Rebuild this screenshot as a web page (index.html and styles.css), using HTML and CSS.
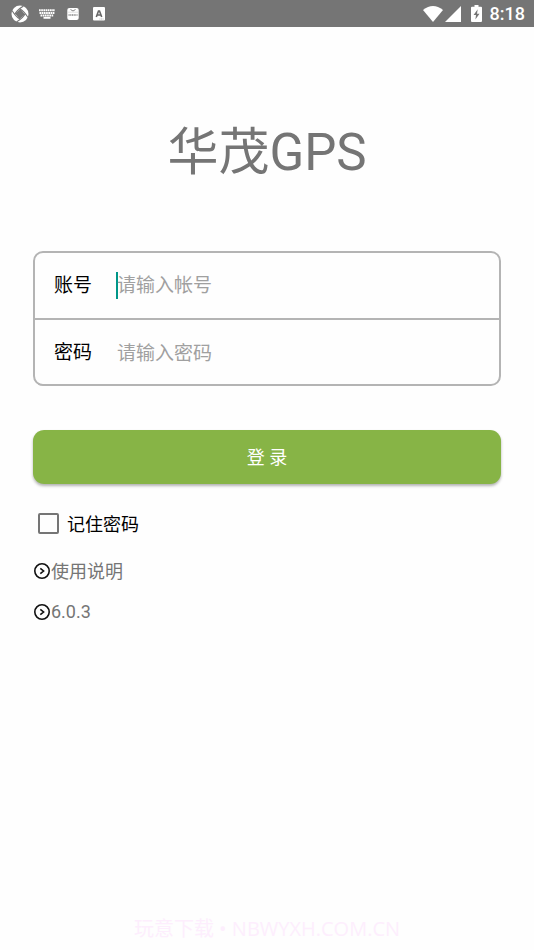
FILE: index.html
```html
<!DOCTYPE html>
<html lang="zh-CN">
<head>
<meta charset="utf-8">
<meta name="viewport" content="width=device-width, initial-scale=1">
<title>华茂GPS</title>
<link rel="stylesheet" href="styles.css">
</head>
<body>
<header class="status">
  <div class="status-left">
    <svg width="18" height="18" viewBox="0 0 18 18" aria-hidden="true">
      <circle cx="9" cy="9" r="8.5" fill="#fff"/>
      <path d="M9.5 4L14 9.5L8.5 14L4 8.5Z" fill="#757575"/>
      <g fill="none" stroke="#757575" stroke-width="1.1">
        <path d="M4 9Q6 5 12.5 1"/>
        <path d="M4 9Q6 5 12.5 1" transform="rotate(90 9 9)"/>
        <path d="M4 9Q6 5 12.5 1" transform="rotate(180 9 9)"/>
        <path d="M4 9Q6 5 12.5 1" transform="rotate(270 9 9)"/>
      </g>
    </svg>
    <svg width="16" height="10" viewBox="0 0 16 10" aria-hidden="true">
      <g stroke="#fff" stroke-width="1.9">
        <path d="M0 1.3H16M0.5 4H15.5" stroke-dasharray="1.7 .5"/>
        <path d="M1.5 6.5H14.5" stroke-dasharray="1.7 .5"/>
        <path d="M4.5 8.8H11.5"/>
      </g>
    </svg>
    <svg width="12" height="14" viewBox="0 0 12 14" aria-hidden="true">
      <rect x=".3" y="1" width="11.4" height="12" rx="2" fill="#fff"/>
      <path d="M1 5.2H11" stroke="#ccc" stroke-width=".6"/>
      <path d="M3.5 2.5Q6 5.5 8.5 2.5" fill="none" stroke="#757575" stroke-width=".9"/>
      <path d="M1.5 8H10.5" stroke="#888" stroke-width="1.3" stroke-dasharray="1.2 .5"/>
    </svg>
    <svg width="12" height="14" viewBox="0 0 12 14" aria-hidden="true">
      <rect width="12" height="13.5" rx="1" fill="#fff"/>
      <path d="M3.3 10L5.5 4H6.5L8.7 10M4.2 8H7.8" fill="none" stroke="#666" stroke-width="1.6"/>
      <path d="M6.5 12H11" stroke="#aaa" stroke-width=".8" stroke-dasharray="1 .5"/>
    </svg>
  </div>
  <div class="status-right">
    <svg width="20" height="16" viewBox="0 0 20 16" aria-hidden="true"><path d="M0 4Q10-4 20 4L10 16Z" fill="#fff"/></svg>
    <svg width="16" height="16" viewBox="0 0 16 16" aria-hidden="true"><path d="M16 0V16H0Z" fill="#fff"/></svg>
    <svg class="battery" width="11" height="17" viewBox="0 0 11 17" aria-hidden="true"><path d="M3.5 0H7.5V1.7H10Q11 1.7 11 2.7V16Q11 17 10 17H1Q0 17 0 16V2.7Q0 1.7 1 1.7H3.5Z" fill="#fff"/><path d="M6.7 4.3L2.6 10H5L4.4 14.6L8.5 8.8H6Z" fill="#757575"/></svg>
    <span class="clock">8:18</span>
  </div>
</header>
<main class="page">
  <h1 class="title">华茂GPS</h1>
  <form class="login">
    <div class="fields">
      <div class="field">
        <label class="label" for="account">账号</label>
        <div class="entry focused"><input class="input" id="account" type="text" placeholder="请输入帐号"></div>
      </div>
      <div class="field">
        <label class="label" for="password">密码</label>
        <div class="entry"><input class="input" id="password" type="password" placeholder="请输入密码"></div>
      </div>
    </div>
    <button class="submit" type="submit">登 录</button>
    <div class="remember">
      <input class="check" id="remember" type="checkbox">
      <label class="remember-label" for="remember">记住密码</label>
    </div>
  </form>
  <nav class="links">
    <a class="link" href="#help"><svg width="18" height="18" viewBox="0 0 18 18" aria-hidden="true"><circle cx="9" cy="9" r="7.2"/><path d="M7.3 6.3L10.6 9L7.3 11.7"/></svg><span class="link-text">使用说明</span></a>
    <a class="link" href="#version"><svg width="18" height="18" viewBox="0 0 18 18" aria-hidden="true"><circle cx="9" cy="9" r="7.2"/><path d="M7.3 6.3L10.6 9L7.3 11.7"/></svg><span>6.0.3</span></a>
  </nav>
</main>
<footer class="footer">玩意下载 • NBWYXH.COM.CN</footer>
</body>
</html>
```
FILE: styles.css
```css
* {
  box-sizing: border-box;
}

body {
  margin: 0;
  min-height: 100vh;
  display: flex;
  flex-direction: column;
  background: #fefefe;
  color: #000;
  font-family: Roboto, "Noto Sans CJK SC", sans-serif;
  font-size: 18px;
}

svg {
  display: block;
}

.status {
  display: flex;
  justify-content: space-between;
  align-items: center;
  height: 27px;
  padding: 0 9px 0 11px;
  background: #757575;
  color: #fff;
}

.status-left {
  display: flex;
  align-items: center;
  gap: 12px;
}

.status-left svg:first-child {
  margin-right: -2px;
}

.status-left svg:last-child {
  margin-left: 2px;
}

.status-right {
  display: flex;
  align-items: center;
  gap: 2px;
}

.battery {
  margin: 0 6px 0 8px;
}

.clock {
  font-size: 18px;
  font-weight: 500;
  line-height: 27px;
}

.page {
  flex: 1;
  padding: 86px 33px 0;
}

.title {
  margin: 0 0 58px;
  color: #757575;
  font-size: 51px;
  font-weight: 400;
  line-height: 80px;
  text-align: center;
}

.fields {
  border: 2px solid #b4b4b4;
  border-radius: 10px;
}

.field {
  display: flex;
  align-items: center;
  height: 65px;
  padding-left: 19px;
  font-size: 19px;
}

.field + .field {
  height: 66px;
  padding-top: 2px;
  border-top: 2px solid #b4b4b4;
}

.label {
  flex: none;
  width: 62px;
  line-height: 24px;
}

.entry {
  flex: 1;
  height: 27px;
  border-left: 2px solid transparent;
}

.focused {
  border-color: #009688;
}

.input {
  display: block;
  width: 100%;
  height: 27px;
  margin-left: -1px;
  padding: 0;
  border: 0;
  outline: 0;
  background: transparent;
  color: #000;
  font: inherit;
}

.input::placeholder {
  color: #a0a0a0;
  opacity: 1;
}

.submit {
  display: block;
  width: 100%;
  height: 54px;
  margin: 44px 0 26px;
  padding: 0 0 2px;
  border: 0;
  border-radius: 11px;
  background: #87b446;
  box-shadow: 0 2px 3px rgba(0, 0, 0, .3);
  color: #fff;
  font: inherit;
}

.remember {
  display: flex;
  align-items: center;
  gap: 8px;
  height: 27px;
  padding-left: 5px;
}

.remember-label,
.link-text {
  padding-bottom: 2px;
}

.check {
  appearance: none;
  width: 21px;
  height: 21px;
  margin: 0;
  border: 2px solid #757575;
  border-radius: 2px;
}

.links {
  display: flex;
  flex-direction: column;
  align-items: flex-start;
  gap: 14px;
  margin-top: 20px;
}

.link {
  display: flex;
  align-items: center;
  height: 27px;
  color: #757575;
  text-decoration: none;
}

.link svg {
  fill: none;
  stroke: #111;
  stroke-width: 1.6;
}

.footer {
  padding-bottom: 6px;
  color: #fdeefd;
  font-family: "Open Sans", "Noto Sans CJK SC", sans-serif;
  font-size: 20px;
  line-height: 30px;
  text-align: center;
}
```
